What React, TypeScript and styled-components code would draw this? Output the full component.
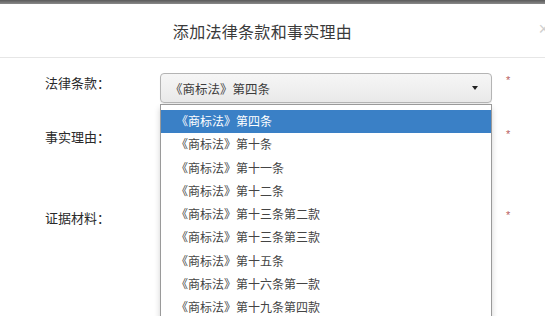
import React from 'react';
import styled, { createGlobalStyle } from 'styled-components';

const GlobalStyle = createGlobalStyle`
  html, body {
    margin: 0;
    padding: 0;
    background: #ffffff;
    overflow: hidden;
  }
  body {
    font-family: "Noto Sans CJK SC", "Noto Sans", "Liberation Sans", sans-serif;
  }
`;

const Dialog = styled.div`
  width: 545px;
  height: 316px;
  background: #fff;
  overflow: hidden;
`;

const TopEdge = styled.div`
  height: 4px;
  background: linear-gradient(#5a5a5a, #8a8a8a);
`;

const Header = styled.div`
  position: relative;
  height: 53px;
  display: flex;
  align-items: center;
  justify-content: center;
  padding-right: 20px;
  border-bottom: 1px solid #e6e6e6;
`;

const Title = styled.h3`
  margin: 0;
  font-size: 16px;
  font-weight: 400;
  color: #3a3a3a;
  letter-spacing: 0.3px;
`;

const CloseButton = styled.span`
  position: absolute;
  right: -4px;
  top: 15px;
  font-size: 18px;
  line-height: 20px;
  color: #cfcfcf;
  font-family: "Liberation Sans", sans-serif;
`;

const Form = styled.div`
  padding-top: 15px;
  display: flex;
  flex-direction: column;
  gap: 24px;
`;

const Row = styled.div`
  display: grid;
  grid-template-columns: 160px 332px auto;
  align-items: start;
`;

const Label = styled.div`
  text-align: right;
  padding-right: 50px;
  font-size: 13px;
  line-height: 20px;
  color: #2a2a2a;
`;

const Required = styled.span`
  padding-left: 14px;
  padding-top: 2px;
  font-size: 11px;
  line-height: 11px;
  color: #b86060;
  font-family: "Liberation Sans", sans-serif;
`;

const SelectWrap = styled.div`
  position: relative;
`;

const SelectBox = styled.div`
  box-sizing: border-box;
  height: 30px;
  border: 1px solid #b4b4b4;
  border-radius: 4px;
  background: linear-gradient(#f6f6f6, #e9e9e9);
  box-shadow: 0 1px 1px rgba(0, 0, 0, 0.08);
  display: flex;
  align-items: center;
  justify-content: space-between;
  padding: 0 13px 0 9px;
  font-size: 12.5px;
  color: #3c3c3c;
`;

const Arrow = styled.span`
  width: 0;
  height: 0;
  border-left: 3.5px solid transparent;
  border-right: 3.5px solid transparent;
  border-top: 4px solid #222;
`;

const Dropdown = styled.ul`
  position: absolute;
  top: 31px;
  left: 0;
  width: 332px;
  box-sizing: border-box;
  margin: 0;
  padding: 5px 0 0;
  list-style: none;
  background: #fff;
  border: 1px solid #9a9a9a;
  box-shadow: 0 4px 6px rgba(0, 0, 0, 0.18);
  z-index: 10;
`;

const Option = styled.li<{ $active?: boolean }>`
  height: 23.3px;
  line-height: 22px;
  padding-left: 15px;
  font-size: 12px;
  color: ${p => (p.$active ? '#fff' : '#444')};
  background: ${p => (p.$active ? '#3a80c6' : 'transparent')};
  white-space: nowrap;
`;

const TextArea = styled.div`
  height: 57px;
  box-sizing: border-box;
  border: 1px solid #ccc;
  border-radius: 4px;
`;

const FileField = styled.div`
  height: 30px;
`;

const options = [
  '《商标法》第四条',
  '《商标法》第十条',
  '《商标法》第十一条',
  '《商标法》第十二条',
  '《商标法》第十三条第二款',
  '《商标法》第十三条第三款',
  '《商标法》第十五条',
  '《商标法》第十六条第一款',
  '《商标法》第十九条第四款',
];

const App: React.FC = () => {
  return (
    <>
      <GlobalStyle />
      <Dialog>
        <TopEdge />
        <Header>
          <Title>添加法律条款和事实理由</Title>
          <CloseButton>×</CloseButton>
        </Header>
        <Form>
          <Row>
            <Label>法律条款：</Label>
            <SelectWrap>
              <SelectBox>
                <span>《商标法》第四条</span>
                <Arrow />
              </SelectBox>
              <Dropdown>
                {options.map((o, i) => (
                  <Option key={o} $active={i === 0}>
                    {o}
                  </Option>
                ))}
              </Dropdown>
            </SelectWrap>
            <Required>*</Required>
          </Row>
          <Row>
            <Label>事实理由：</Label>
            <TextArea />
            <Required>*</Required>
          </Row>
          <Row>
            <Label>证据材料：</Label>
            <FileField />
            <Required>*</Required>
          </Row>
        </Form>
      </Dialog>
    </>
  );
};

export default App;
